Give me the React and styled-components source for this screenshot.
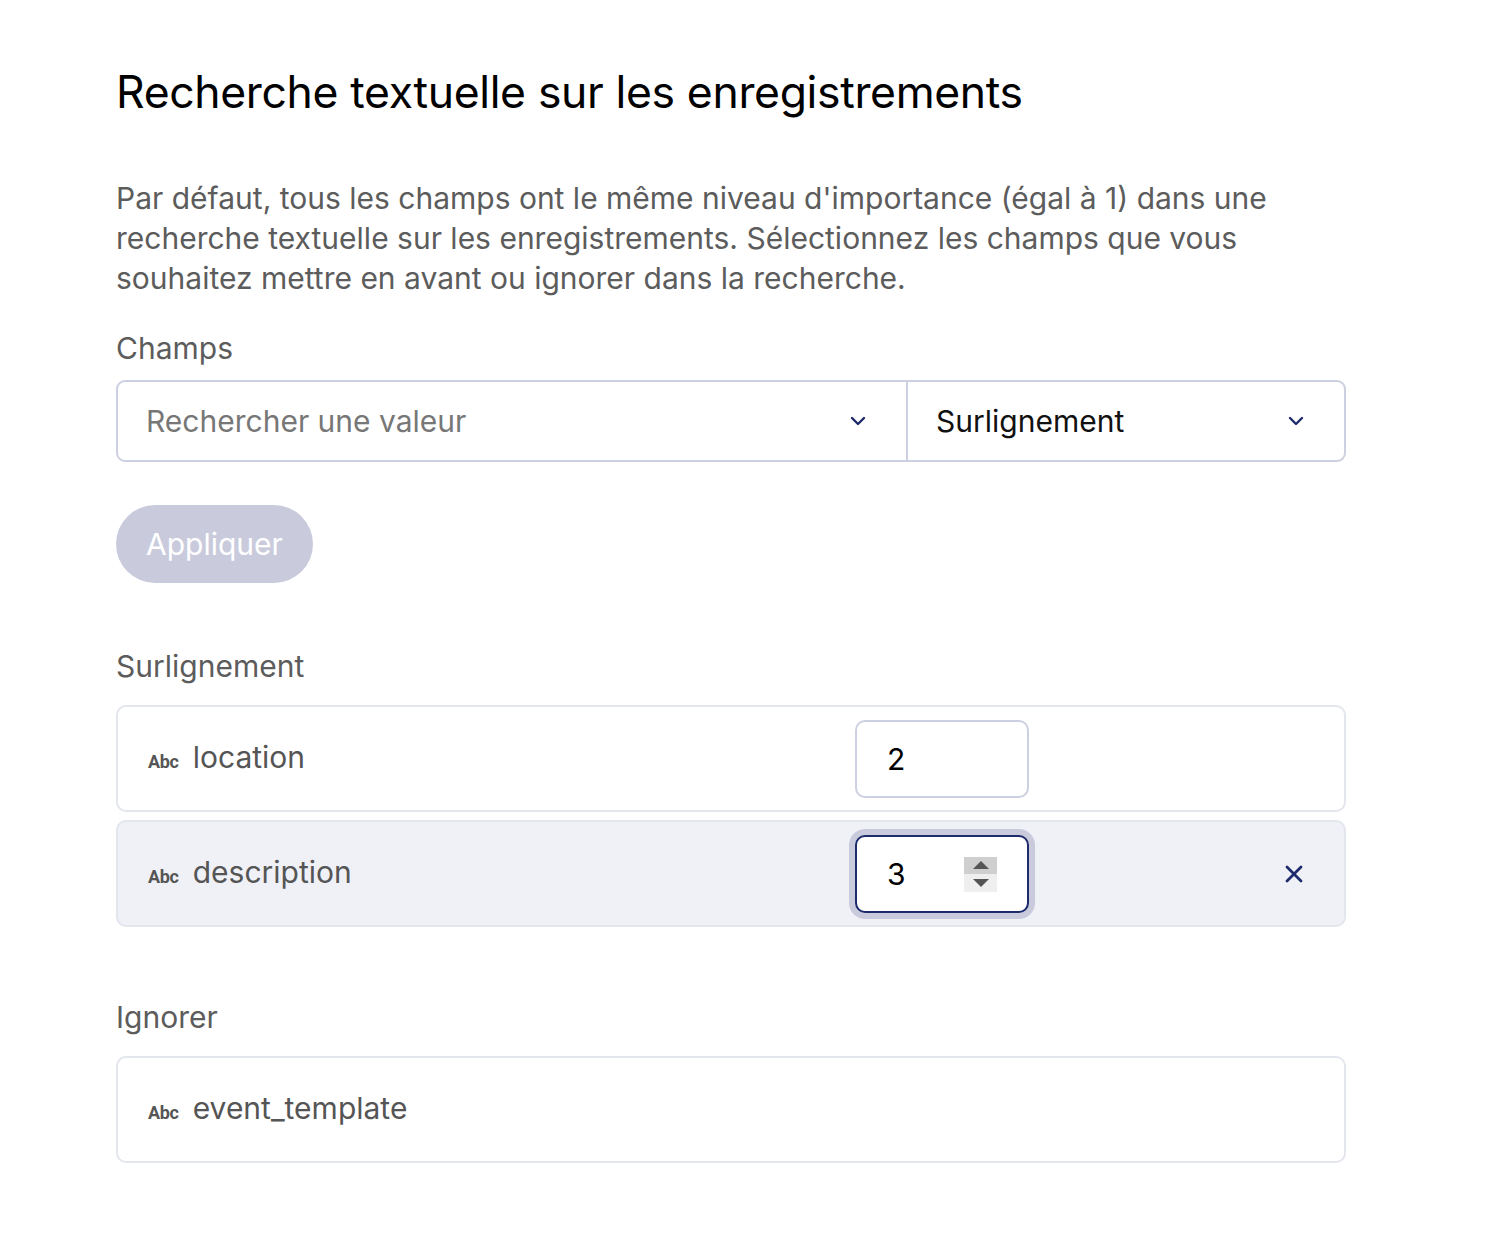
import React from 'react';
import styled, { createGlobalStyle } from 'styled-components';
import { ChevronDown, X } from 'lucide-react';

const GlobalStyle = createGlobalStyle`
    body {
        margin: 0;
        background: #ffffff;
        font-family: Inter, "Liberation Sans", sans-serif;
    }
`;

const Page = styled.div`
    width: 1230px;
    padding: 62px 0 80px 116px;
`;

const Title = styled.h1`
    margin: 0;
    font-size: 44.5px;
    font-weight: 400;
    line-height: 60px;
    color: #000;
    letter-spacing: -0.35px;
`;

const Intro = styled.p`
    margin: 56px 0 0;
    font-size: 30px;
    line-height: 40px;
    color: #5c5c5c;
    letter-spacing: 0;
`;

const Label = styled.div`
    margin-top: ${p => p.$top || 0}px;
    margin-bottom: ${p => p.$bottom || 14}px;
    font-size: 30px;
    line-height: 40px;
    color: #5c5c5c;
`;

const SelectGroup = styled.div`
    display: grid;
    grid-template-columns: 788px 1fr;
    height: 82px;
    border: 2px solid #cdd0e0;
    border-radius: 9px;
    box-sizing: border-box;
`;

const Select = styled.div`
    display: flex;
    align-items: center;
    justify-content: space-between;
    padding: 0 36px 0 28px;
    border-left: ${p => (p.$split ? '2px solid #cdd0e0' : 'none')};
    font-size: 30px;
    color: ${p => (p.$placeholder ? '#777777' : '#111111')};
`;

const ApplyButton = styled.button`
    margin-top: 43px;
    height: 78px;
    padding: 0 30px;
    border: none;
    border-radius: 39px;
    background: #c9cbdd;
    color: #ffffff;
    font-family: inherit;
    font-size: 30px;
`;

const List = styled.div`
    display: flex;
    flex-direction: column;
    gap: 8px;
`;

const Row = styled.div`
    display: flex;
    align-items: center;
    height: 107px;
    padding: 0 36px 0 30px;
    border: 2px solid #e4e6ee;
    border-radius: 10px;
    box-sizing: border-box;
    background: ${p => (p.$active ? '#f0f1f7' : '#ffffff')};
`;

const FieldName = styled.div`
    flex: 1;
    display: flex;
    align-items: baseline;
    gap: 14px;
    font-size: 30px;
    color: #555555;
    margin-top: -4px;
`;

const TypeTag = styled.span`
    font-family: Roboto, "Liberation Sans", sans-serif;
    font-size: 18px;
    font-weight: 700;
    color: #555555;
    letter-spacing: -0.3px;
`;

const WeightBox = styled.div`
    position: relative;
    display: flex;
    align-items: center;
    width: 174px;
    height: 78px;
    margin-right: 199px;
    padding-left: 30px;
    box-sizing: border-box;
    border: 2px solid ${p => (p.$focused ? '#1d2a6b' : '#cdd0e0')};
    border-radius: 10px;
    background: #ffffff;
    box-shadow: ${p => (p.$focused ? '0 0 0 6px #c9cbdd' : 'none')};
    font-size: 30px;
    color: #000;
`;

const Spinner = styled.div`
    position: absolute;
    right: 30px;
    top: 20px;
    width: 33px;
    height: 35px;
    display: flex;
    flex-direction: column;
`;

const SpinHalf = styled.div`
    flex: 1;
    display: flex;
    align-items: center;
    justify-content: center;
    background: ${p => (p.$up ? '#cfcfcf' : '#efefef')};
`;

const Arrow = styled.span`
    width: 0;
    height: 0;
    border-left: 8px solid transparent;
    border-right: 8px solid transparent;
    ${p => (p.$up ? 'border-bottom: 8px solid #555;' : 'border-top: 8px solid #555;')}
`;

const RemoveButton = styled.div`
    width: 80px;
    display: flex;
    justify-content: flex-end;
    color: #1d2a6b;
`;

const Field = ({ name, weight, active }) => (
    <Row $active={active}>
        <FieldName>
            <TypeTag>Abc</TypeTag>
            {name}
        </FieldName>
        {weight && (
            <WeightBox $focused={active}>
                {weight}
                {active && (
                    <Spinner>
                        <SpinHalf $up><Arrow $up /></SpinHalf>
                        <SpinHalf><Arrow /></SpinHalf>
                    </Spinner>
                )}
            </WeightBox>
        )}
        {weight && (
            <RemoveButton>
                {active && <X size={28} strokeWidth={2.4} />}
            </RemoveButton>
        )}
    </Row>
);

const App = () => {
    return (
        <Page>
            <GlobalStyle />
            <Title>Recherche textuelle sur les enregistrements</Title>
            <Intro>
                Par défaut, tous les champs ont le même niveau d'importance (égal à 1) dans une
                recherche textuelle sur les enregistrements. Sélectionnez les champs que vous
                souhaitez mettre en avant ou ignorer dans la recherche.
            </Intro>

            <Label $top={30} $bottom={12}>Champs</Label>
            <SelectGroup>
                <Select $placeholder>
                    Rechercher une valeur
                    <ChevronDown size={24} strokeWidth={2.4} color="#1d2a6b" />
                </Select>
                <Select $split>
                    Surlignement
                    <ChevronDown size={24} strokeWidth={2.4} color="#1d2a6b" />
                </Select>
            </SelectGroup>

            <ApplyButton>Appliquer</ApplyButton>

            <Label $top={63} $bottom={19}>Surlignement</Label>
            <List>
                <Field name="location" weight="2" />
                <Field name="description" weight="3" active />
            </List>

            <Label $top={70} $bottom={19}>Ignorer</Label>
            <List>
                <Field name="event_template" />
            </List>
        </Page>
    );
};

export default App;
